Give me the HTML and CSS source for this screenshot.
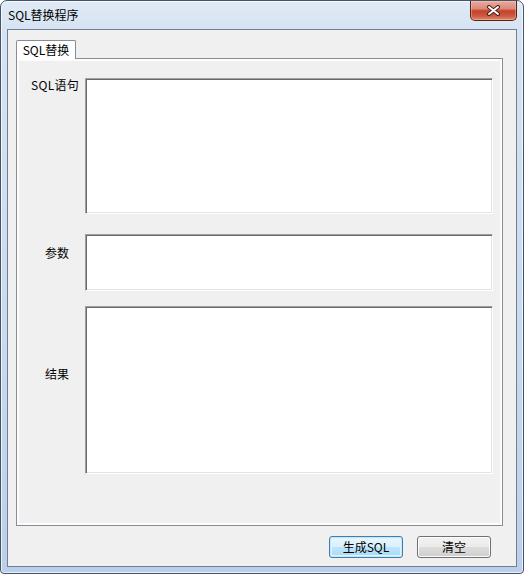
FILE: index.html
```html
<!DOCTYPE html>
<html lang="zh-CN">
<head>
<meta charset="utf-8">
<title>SQL替换程序</title>
<link rel="stylesheet" href="styles.css">
</head>
<body>
<div class="window">
  <div class="titlebar">
    <div class="title">SQL替换程序</div>
    <div class="close">
      <svg width="15" height="11" viewBox="0 0 15 11">
        <path d="M3 2 L12 9 M12 2 L3 9" stroke="#4a1d16" stroke-width="4" stroke-linecap="round" fill="none"/>
        <path d="M3 2 L12 9 M12 2 L3 9" stroke="#ffffff" stroke-width="2" stroke-linecap="round" fill="none"/>
      </svg>
    </div>
  </div>
  <div class="client">
    <div class="tabs">
      <div class="tab active">SQL替换</div>
    </div>
    <div class="panel">
      <div class="row row-sql">
        <div class="label label-sql">SQL语句</div>
        <div class="textbox box-sql"></div>
      </div>
      <div class="row row-param">
        <div class="label label-param">参数</div>
        <div class="textbox box-param"></div>
      </div>
      <div class="row">
        <div class="label label-result">结果</div>
        <div class="textbox box-result"></div>
      </div>
    </div>
    <div class="buttons">
      <div class="btn focused">生成SQL</div>
      <div class="btn">清空</div>
    </div>
  </div>
</div>
</body>
</html>
```

FILE: styles.css
```css
* { box-sizing: border-box; }
html, body { margin: 0; padding: 0; }
body {
  width: 524px;
  height: 574px;
  overflow: hidden;
  background: #ffffff;
  font-family: "Noto Sans CJK SC", "Noto Sans", sans-serif;
  font-size: 12px;
  color: #000;
}
.window {
  width: 524px;
  height: 574px;
  border: 1px solid #44526a;
  border-radius: 7px 7px 4px 4px;
  background: linear-gradient(to bottom, #e0eaf6 0px, #d6e3f2 30px, #c9daee 60%, #bccfe8 100%);
  box-shadow: inset 0 0 0 1px rgba(255,255,255,0.7);
  display: flex;
  flex-direction: column;
  padding: 0 6px 6px 6px;
}
.titlebar {
  height: 28px;
  display: flex;
  justify-content: space-between;
  align-items: flex-start;
}
.title {
  padding-left: 1px;
  line-height: 28px;
  font-size: 12px;
  color: #000;
}
.close {
  width: 47px;
  height: 20px;
  border: 1px solid #5a2018;
  border-top: none;
  border-radius: 0 0 5px 5px;
  background: linear-gradient(to bottom, #e9ab9e 0%, #dc8a78 40%, #c4422b 52%, #cf5a41 80%, #e08b6f 100%);
  box-shadow: inset 0 0 0 1px rgba(255,220,210,0.35);
  display: flex;
  align-items: center;
  justify-content: center;
}
.close svg { display: block; }
.client {
  flex: 1;
  background: #f0f0f0;
  border: 1px solid #6f7f96;
  padding: 10px 13px 8px 8px;
  display: flex;
  flex-direction: column;
}
.tabs {
  display: flex;
  height: 18px;
  position: relative;
  z-index: 1;
}
.tab {
  width: 60px;
  height: 19px;
  border: 1px solid #898c95;
  border-bottom: none;
  border-radius: 2px 2px 0 0;
  background: #ffffff;
  text-align: center;
  line-height: 17px;
  font-size: 12px;
}
.panel {
  height: 468px;
  border: 1px solid #898c95;
  background: #f0f0f0;
  box-shadow: inset 0 0 0 2px #fcfcfc;
  padding: 19px 9px 0 0;
  display: flex;
  flex-direction: column;
}
.row { display: flex; }
.row-sql { margin-bottom: 20px; }
.row-param { margin-bottom: 15px; }
.label {
  width: 68px;
  font-size: 12px;
  line-height: 14px;
  white-space: nowrap;
}
.label-sql { padding-left: 14px; margin-top: 0px; letter-spacing: 0.3px; }
.label-param { padding-left: 28px; margin-top: 12px; }
.label-result { padding-left: 28px; margin-top: 61px; }
.textbox {
  width: 408px;
  background: #ffffff;
  border-top: 1px solid #a0a0a0;
  border-left: 1px solid #a0a0a0;
  border-right: 1px solid #ffffff;
  border-bottom: 1px solid #ffffff;
  box-shadow: inset 1px 1px 0 #696969, inset -1px -1px 0 #e3e3e3;
}
.box-sql { height: 136px; }
.box-param { height: 57px; }
.box-result { height: 168px; }
.buttons {
  display: flex;
  justify-content: flex-end;
  gap: 14px;
  margin-top: 10px;
  padding-right: 12px;
}
.btn {
  width: 74px;
  height: 22px;
  border: 1px solid #707070;
  border-radius: 3px;
  background: linear-gradient(to bottom, #f2f2f2 0%, #ebebeb 50%, #dddddd 50%, #cfcfcf 100%);
  box-shadow: inset 0 0 0 1px #fcfcfc;
  text-align: center;
  line-height: 20px;
  font-size: 12px;
}
.btn.focused {
  border-color: #3c7fb1;
  background: linear-gradient(to bottom, #eaf6fd 0%, #d9f0fc 50%, #bee6fd 50%, #a7d9f5 100%);
  box-shadow: inset 0 0 0 1px #c6e6f8, inset 0 0 0 2px #e4f3fb;
}
```
